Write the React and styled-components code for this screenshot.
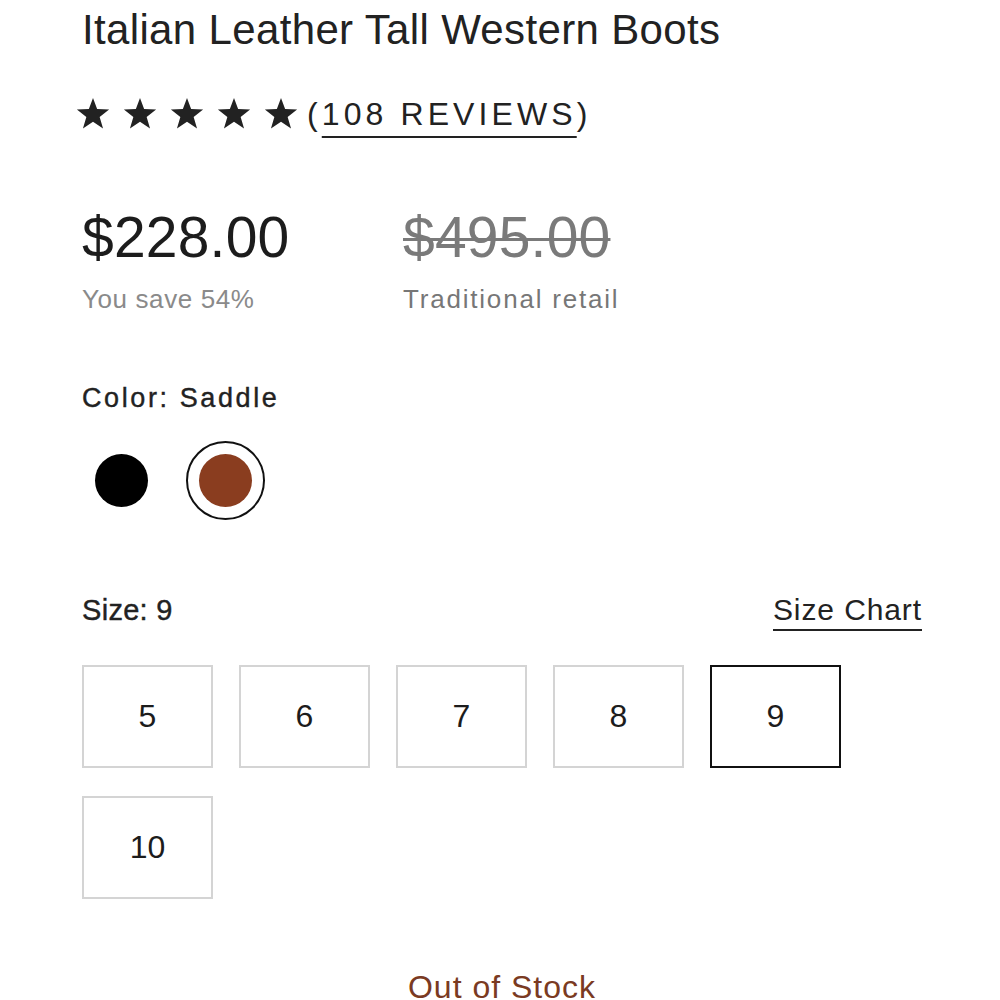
import React from "react";
import styled, { createGlobalStyle } from "styled-components";

const Global = createGlobalStyle`
  html, body { margin: 0; padding: 0; background: #ffffff; }
  body { font-family: "Liberation Sans", Arial, Helvetica, sans-serif; color: #222; }
  * { box-sizing: border-box; }
`;

const Page = styled.main`
  width: 1000px;
  height: 1000px;
  overflow: hidden;
  padding: 5px 78px 0 82px;
  display: flex;
  flex-direction: column;
`;

const Title = styled.h1`
  margin: 0;
  font-size: 42px;
  line-height: 50px;
  font-weight: 400;
  letter-spacing: 0.35px;
  color: #222;
`;

const RatingRow = styled.div`
  margin-top: 39px;
  height: 40px;
  display: flex;
  align-items: center;
`;

const Stars = styled.div`
  display: flex;
  gap: 11px;
  margin-left: -7px;
  margin-right: 8px;
`;

const ReviewText = styled.span`
  font-size: 32px;
  line-height: 40px;
  letter-spacing: 4.1px;
  color: #222;
`;

const ReviewLink = styled.a`
  color: inherit;
  text-decoration: underline;
  text-decoration-thickness: 2px;
  text-underline-offset: 11px;
`;

const PriceGrid = styled.div`
  margin-top: 70px;
  display: grid;
  grid-template-columns: 321px auto;
  row-gap: 14px;
`;

const Price = styled.div`
  font-size: 57px;
  line-height: 66px;
  font-weight: 400;
  letter-spacing: 0.2px;
  color: ${(p) => (p.$old ? "#7a7a7a" : "#1c1c1c")};
  text-decoration: ${(p) => (p.$old ? "line-through" : "none")};
  text-decoration-thickness: 3px;
`;

const Sub = styled.div`
  font-size: 26px;
  line-height: 30px;
  letter-spacing: ${(p) => (p.$wide ? 1.8 : 0.6)}px;
  color: ${(p) => (p.$dark ? "#777" : "#8a8a8a")};
`;

const Label = styled.div`
  font-size: ${(p) => p.$size || 27}px;
  line-height: 30px;
  font-weight: 500;
  letter-spacing: ${(p) => p.$ls || 0}px;
  color: #222;
  -webkit-text-stroke: 0.4px #222;
`;

const ColorLabel = styled(Label)`
  margin-top: 69px;
`;

const Swatches = styled.div`
  margin-top: 28px;
  display: flex;
  gap: 25px;
`;

const SwatchRing = styled.div`
  width: 79px;
  height: 79px;
  border-radius: 50%;
  border: 2px solid ${(p) => (p.$selected ? "#111" : "transparent")};
  display: flex;
  align-items: center;
  justify-content: center;
`;

const Swatch = styled.div`
  width: 53px;
  height: 53px;
  border-radius: 50%;
  background: ${(p) => p.$color};
`;

const SizeHeader = styled.div`
  margin-top: 75px;
  display: flex;
  justify-content: space-between;
  align-items: flex-start;
`;

const SizeChart = styled.a`
  font-size: 30px;
  line-height: 30px;
  letter-spacing: 0.9px;
  color: #222;
  padding-bottom: 4px;
  border-bottom: 2px solid #222;
  text-decoration: none;
`;

const SizeGrid = styled.div`
  margin-top: 34px;
  display: flex;
  flex-wrap: wrap;
  column-gap: 26px;
  row-gap: 28px;
  width: 840px;
`;

const SizeBox = styled.button`
  width: 131px;
  height: 103px;
  background: #fff;
  border: 2px solid ${(p) => (p.$selected ? "#111" : "#d4d4d4")};
  font-family: "Liberation Sans", Arial, sans-serif;
  font-size: 32px;
  color: #1c1c1c;
  display: flex;
  align-items: center;
  justify-content: center;
  padding: 0;
`;

const Stock = styled.div`
  margin-top: 70px;
  text-align: center;
  font-size: 32px;
  line-height: 36px;
  letter-spacing: 1px;
  color: #7a3a22;
`;

const Star = () => (
  <svg width="36" height="34" viewBox="0 0 24 23" aria-hidden="true">
    <path
      fill="#222"
      d="M12 0.6l2.8 7.6 8.1 0.3-6.4 5 2.3 7.8L12 16.8l-6.8 4.5 2.3-7.8-6.4-5 8.1-0.3z"
    />
  </svg>
);

const sizes = ["5", "6", "7", "8", "9", "10"];

export default function App() {
  return (
    <>
      <Global />
      <Page>
        <Title>Italian Leather Tall Western Boots</Title>
        <RatingRow>
          <Stars>
            {[0, 1, 2, 3, 4].map((i) => (
              <Star key={i} />
            ))}
          </Stars>
          <ReviewText>
            (<ReviewLink>108 REVIEWS</ReviewLink>)
          </ReviewText>
        </RatingRow>
        <PriceGrid>
          <Price>$228.00</Price>
          <Price $old>$495.00</Price>
          <Sub>You save 54%</Sub>
          <Sub $dark $wide>Traditional retail</Sub>
        </PriceGrid>
        <ColorLabel $size={27} $ls={2.6}>Color: Saddle</ColorLabel>
        <Swatches>
          <SwatchRing>
            <Swatch $color="#000" />
          </SwatchRing>
          <SwatchRing $selected>
            <Swatch $color="#8a3d1f" />
          </SwatchRing>
        </Swatches>
        <SizeHeader>
          <Label $size={29} $ls={0.3}>Size: 9</Label>
          <SizeChart>Size Chart</SizeChart>
        </SizeHeader>
        <SizeGrid>
          {sizes.map((s) => (
            <SizeBox key={s} $selected={s === "9"}>
              {s}
            </SizeBox>
          ))}
        </SizeGrid>
        <Stock>Out of Stock</Stock>
      </Page>
    </>
  );
}
